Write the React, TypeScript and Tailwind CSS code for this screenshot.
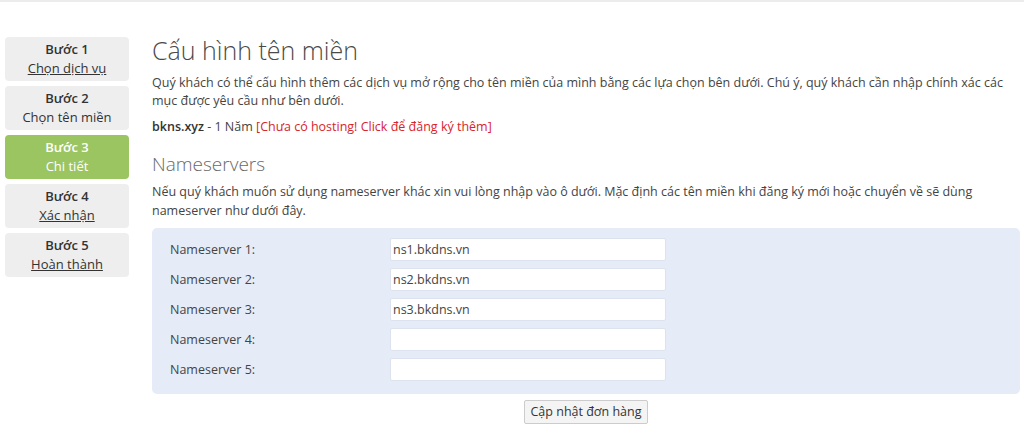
const steps = [
  { title: "Bước 1", label: "Chọn dịch vụ", link: true },
  { title: "Bước 2", label: "Chọn tên miền", link: false },
  { title: "Bước 3", label: "Chi tiết", active: true },
  { title: "Bước 4", label: "Xác nhận", link: true },
  { title: "Bước 5", label: "Hoàn thành", link: true },
];

const nameservers = ["ns1.bkdns.vn", "ns2.bkdns.vn", "ns3.bkdns.vn", "", ""];

export default function App() {
  return (
    <div
      className="min-h-[443px] w-[1024px] border-t-2 border-[#ececec] bg-white text-[12.5px] text-[#444]"
      style={{ fontFamily: '"Open Sans", "Noto Sans", sans-serif' }}
    >
      <div className="flex gap-[23px] pl-[5px] pr-[4px] pt-[33px]">
        <div className="mt-[2px] flex w-[124px] shrink-0 flex-col gap-[5px] text-[13px]">
          {steps.map((s) => (
            <div
              key={s.title}
              className={`flex h-[44px] flex-col items-center justify-center rounded-[4px] leading-[19px] ${
                s.active ? "bg-[#9bc561] text-white" : "bg-[#eeeeee] text-[#333]"
              }`}
            >
              <span className="font-semibold">{s.title}</span>
              <span className={s.link ? "underline" : ""}>{s.label}</span>
            </div>
          ))}
        </div>

        <div className="flex-1">
          <h1 className="text-[25px] font-light leading-[30px] text-[#4a4a4a]">Cấu hình tên miền</h1>
          <p className="mt-[9px] leading-[18px]">
            Quý khách có thể cấu hình thêm các dịch vụ mở rộng cho tên miền của mình bằng các lựa chọn bên dưới. Chú ý,
            quý khách cần nhập chính xác các mục được yêu cầu như bên dưới.
          </p>
          <p className="mt-[8px] leading-[18px]">
            <span className="font-semibold text-[#333]">bkns.xyz</span> - 1 Năm{" "}
            <span className="text-[#d9232d]">[Chưa có hosting! Click để đăng ký thêm]</span>
          </p>

          <h2 className="mt-[16px] text-[19px] font-light leading-[24px] text-[#6a6a6a]">Nameservers</h2>
          <p className="mt-[6px] leading-[19px]">
            Nếu quý khách muốn sử dụng nameserver khác xin vui lòng nhập vào ô dưới. Mặc định các tên miền khi đăng ký mới
            hoặc chuyển về sẽ dùng nameserver như dưới đây.
          </p>

          <div className="mt-[8px] flex flex-col gap-[7px] rounded-[5px] bg-[#e6ecf7] px-[18px] pb-[13px] pt-[10px]">
            {nameservers.map((ns, i) => (
              <div key={i} className="flex items-center">
                <span className="w-[220px] pt-[2px]">Nameserver {i + 1}:</span>
                <input
                  defaultValue={ns}
                  className="h-[23px] w-[276px] rounded-[2px] border border-[#dde3ee] bg-white px-[2px] text-[12.5px] text-[#444] outline-none"
                />
              </div>
            ))}
          </div>

          <div className="mt-[6px] flex justify-center">
            <button className="h-[24px] rounded-[2px] border border-[#ccc] bg-[#f4f4f4] px-[6px] text-[12.5px] text-[#333]">
              Cập nhật đơn hàng
            </button>
          </div>
        </div>
      </div>
    </div>
  );
}
